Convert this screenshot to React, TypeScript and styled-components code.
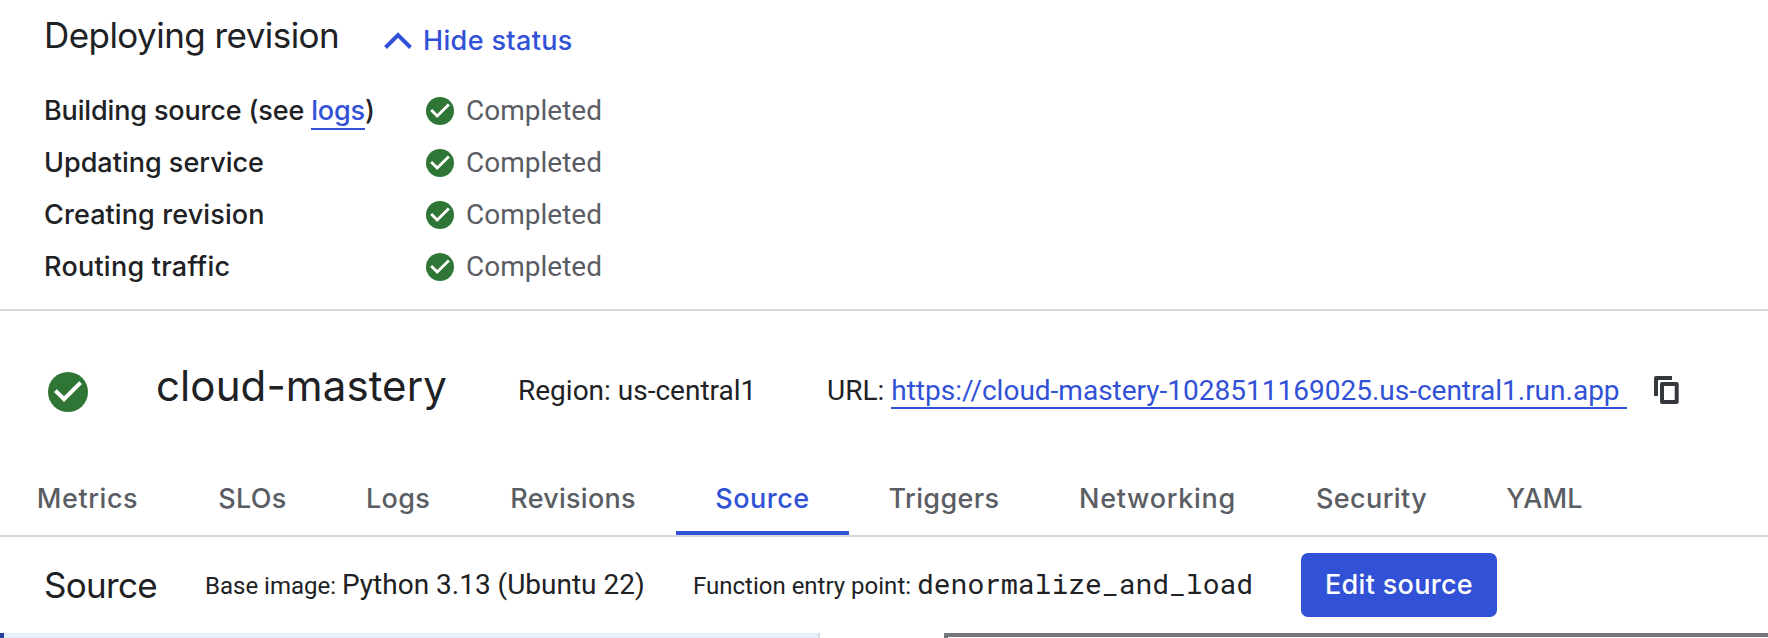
import React from "react";
import styled, { createGlobalStyle } from "styled-components";

const blue = "#3151d6";
const ink = "#202124";
const muted = "#5a5d63";
const line = "#d7d7de";
const brandFont = `"Inter", "Open Sans", sans-serif`;
const textFont = `"Roboto", sans-serif`;

const GlobalStyle = createGlobalStyle`
  * { box-sizing: border-box; }
  body { margin: 0; background: #fff; color: ${ink}; font-family: ${textFont}; overflow: hidden; }
`;

const Page = styled.div`
  display: flex;
  flex-direction: column;
  width: 1768px;
  height: 638px;
  overflow: hidden;
  background: #fff;
  white-space: nowrap;
`;

const StatusPanel = styled.section`
  height: 311px;
  flex: none;
  padding: 15px 44px 0;
  border-bottom: 2px solid ${line};
`;

const StatusHeader = styled.header`
  display: flex;
  align-items: flex-start;
  height: 70px;
`;

const PanelTitle = styled.h1`
  width: 339px;
  margin: 0;
  font: 400 35px/40px ${brandFont};
  letter-spacing: -0.55px;
`;

const ToggleButton = styled.button`
  display: flex;
  align-items: center;
  gap: 10px;
  margin: 10px 0 0;
  padding: 0;
  border: 0;
  background: none;
  color: ${blue};
  font: 500 27px/32px ${brandFont};
  letter-spacing: 0.35px;
`;

const StepGrid = styled.dl`
  display: grid;
  grid-template-columns: 382px auto;
  grid-auto-rows: 52px;
  align-items: center;
  margin: 0;
`;

const StepName = styled.dt<{ $spacing: number }>`
  font: 500 27px/52px ${brandFont};
  letter-spacing: ${(p) => p.$spacing}px;
  color: ${ink};
`;

const StepState = styled.dd`
  display: flex;
  align-items: center;
  gap: 12px;
  margin: 0;
  font: 400 28px/52px ${textFont};
  color: ${muted};
`;

const Link = styled.a<{ $drop?: number }>`
  color: ${blue};
  border-bottom: 2px solid ${blue};
  padding-bottom: ${(p) => p.$drop ?? 0}px;
  white-space: pre;
`;

const ServiceHeader = styled.section`
  display: flex;
  align-items: center;
  flex: none;
  height: 162px;
  padding-left: 48px;
`;

const ServiceName = styled.h2`
  width: 362px;
  margin: -12px 0 0 68px;
  font: 400 42px/52px ${brandFont};
  letter-spacing: 0.1px;
`;

const ServiceFact = styled.div<{ $width?: number }>`
  width: ${(p) => (p.$width ? `${p.$width}px` : "auto")};
  margin-top: -2px;
  font: 400 28px/40px ${textFont};
`;

const CopyButton = styled.button`
  display: flex;
  margin: -4px 0 0 27px;
  padding: 0;
  border: 0;
  background: none;
  color: #35383c;
`;

const TabBar = styled.nav`
  display: flex;
  flex: none;
  height: 64px;
  border-bottom: 2px solid ${line};
`;

const Tab = styled.a<{ $width: number; $spacing: number; $active?: boolean }>`
  width: ${(p) => p.$width}px;
  flex: none;
  text-align: center;
  font: 500 27px/52px ${brandFont};
  letter-spacing: ${(p) => p.$spacing}px;
  color: ${(p) => (p.$active ? blue : muted)};
  border-bottom: 4px solid ${(p) => (p.$active ? blue : "transparent")};

  &:first-child {
    margin-left: -4px;
  }
`;

const SourceBar = styled.section`
  display: flex;
  align-items: center;
  flex: none;
  height: 96px;
  padding-left: 44px;
`;

const SourceTitle = styled.h3`
  width: 161px;
  margin: 0;
  font: 400 35px/44px ${brandFont};
  letter-spacing: -0.7px;
`;

const SourceFact = styled.div<{ $width: number }>`
  width: ${(p) => p.$width}px;
  flex: none;
  font: 400 24px/40px ${textFont};
`;

const FactValue = styled.span`
  font-size: 28px;
`;

const CodeValue = styled.code`
  font: 400 28px/40px "Roboto Mono", "Liberation Mono", monospace;
`;

const PrimaryButton = styled.button`
  width: 196px;
  height: 64px;
  padding: 0 0 1px;
  border: 0;
  border-radius: 7px;
  background: ${blue};
  color: #fff;
  font: 500 27px/36px ${brandFont};
  letter-spacing: 0.3px;
`;

const Workspace = styled.main`
  display: flex;
  flex: 1;
  justify-content: space-between;
`;

const FileRow = styled.div`
  width: 820px;
  background: #e6edfc;
  border-left: 4px solid #263e9c;
  border-right: 2px solid ${line};
`;

const EditorPane = styled.div`
  width: 824px;
  border-top: 4px solid #74777c;
  border-left: 4px solid #74777c;
`;

const CheckCircle = ({ size }: { size: number }) => (
  <svg width={size} height={size} viewBox="0 0 20 20" aria-hidden="true">
    <circle cx="10" cy="10" r="10" fill="#2f7636" />
    <path d="M8 15 3 10l1.41-1.41L8 12.17l7.59-7.59L17 6z" fill="#fff" />
  </svg>
);

const ChevronUp = () => (
  <svg width="30" height="20" viewBox="0 0 30 20" aria-hidden="true">
    <path d="M2.5 16.5 15 4l12.5 12.5" fill="none" stroke="currentColor" strokeWidth="4" />
  </svg>
);

const CopyIcon = () => (
  <svg width="25" height="28" viewBox="0 0 25 28" fill="none" stroke="currentColor" strokeWidth="4" strokeLinejoin="round" aria-hidden="true">
    <path d="M18 2H2v18" />
    <rect x="8" y="8" width="14.7" height="18" />
  </svg>
);

const steps = [
  { name: "Building source", spacing: -0.15, logs: true },
  { name: "Updating service", spacing: 0 },
  { name: "Creating revision", spacing: 0.1 },
  { name: "Routing traffic", spacing: 0.25 },
];

const tabs = [
  { name: "Metrics", width: 183, spacing: 0.55 },
  { name: "SLOs", width: 147, spacing: 0.3 },
  { name: "Logs", width: 144, spacing: 0.3 },
  { name: "Revisions", width: 206, spacing: 0.25 },
  { name: "Source", width: 173, spacing: 0.5 },
  { name: "Triggers", width: 190, spacing: 0.35 },
  { name: "Networking", width: 237, spacing: 0.7 },
  { name: "Security", width: 191, spacing: 0.4 },
  { name: "YAML", width: 155, spacing: 0.2 },
];

export default function App() {
  return (
    <>
      <GlobalStyle />
      <Page>
        <StatusPanel>
          <StatusHeader>
            <PanelTitle>Deploying revision</PanelTitle>
            <ToggleButton>
              <ChevronUp />
              Hide status
            </ToggleButton>
          </StatusHeader>
          <StepGrid>
            {steps.map((s) => (
              <React.Fragment key={s.name}>
                <StepName $spacing={s.spacing}>
                  {s.name}
                  {s.logs && <> (see <Link $drop={1}>logs</Link>)</>}
                </StepName>
                <StepState>
                  <CheckCircle size={28} />
                  Completed
                </StepState>
              </React.Fragment>
            ))}
          </StepGrid>
        </StatusPanel>

        <ServiceHeader>
          <CheckCircle size={40} />
          <ServiceName>cloud-mastery</ServiceName>
          <ServiceFact $width={309}>Region: us-central1</ServiceFact>
          <ServiceFact>
            URL: <Link>{"https://cloud-mastery-1028511169025.us-central1.run.app "}</Link>
          </ServiceFact>
          <CopyButton aria-label="Copy URL">
            <CopyIcon />
          </CopyButton>
        </ServiceHeader>

        <TabBar>
          {tabs.map((t) => (
            <Tab key={t.name} $width={t.width} $spacing={t.spacing} $active={t.name === "Source"}>
              {t.name}
            </Tab>
          ))}
        </TabBar>

        <SourceBar>
          <SourceTitle>Source</SourceTitle>
          <SourceFact $width={488}>
            Base image: <FactValue>Python 3.13 (Ubuntu 22)</FactValue>
          </SourceFact>
          <SourceFact $width={608}>
            Function entry point: <CodeValue>denormalize_and_load</CodeValue>
          </SourceFact>
          <PrimaryButton>Edit source</PrimaryButton>
        </SourceBar>

        <Workspace>
          <FileRow />
          <EditorPane />
        </Workspace>
      </Page>
    </>
  );
}
